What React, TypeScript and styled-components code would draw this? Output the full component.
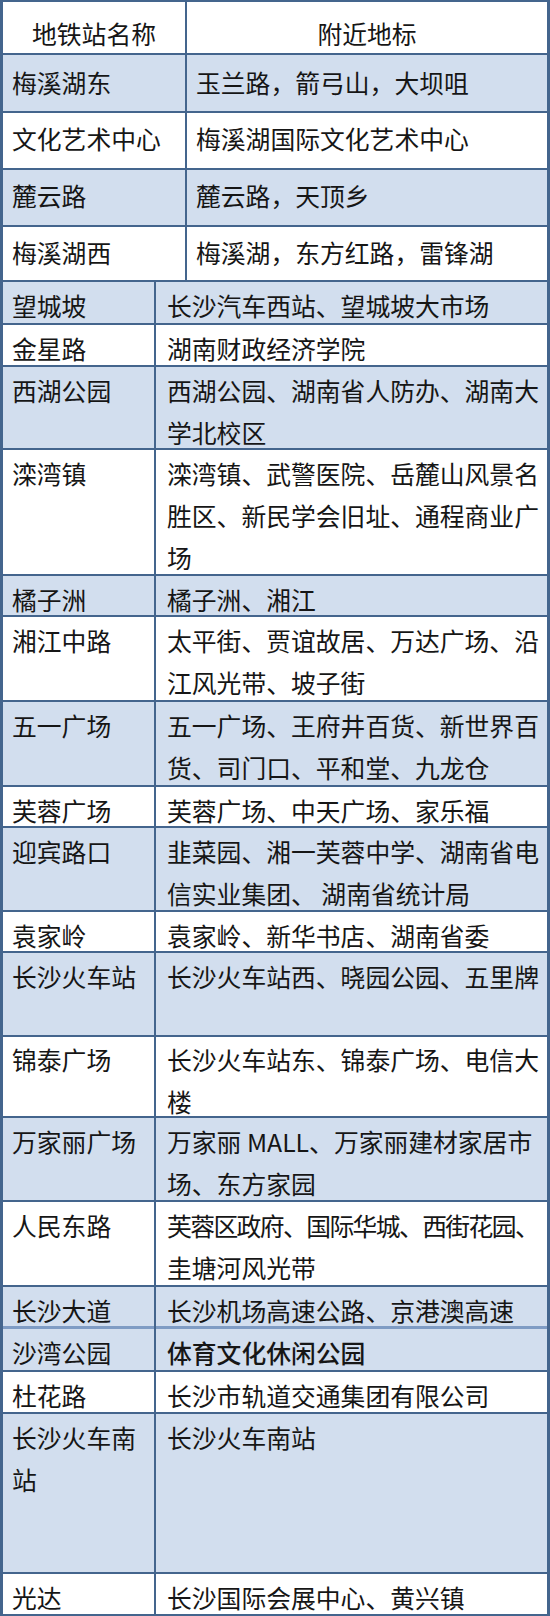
import React from "react";
import styled, { createGlobalStyle } from "styled-components";

const LINE = "#44658d";
const BLUE = "#d2deee";
const WHITE = "#ffffff";

const GlobalStyle = createGlobalStyle`
  html, body {
    margin: 0;
    padding: 0;
    background: #ffffff;
  }
  body {
    font-family: "Noto Sans CJK SC", "Noto Sans", sans-serif;
  }
`;

const Table = styled.div`
  width: 550px;
  box-sizing: border-box;
  border-left: 3px solid ${LINE};
  border-right: 3px solid ${LINE};
  border-top: 2px solid ${LINE};
`;

const Row = styled.div<{ $split: number; $h: number; $bg: string; $line: string; $lineW: number }>`
  display: grid;
  grid-template-columns: ${(p) => p.$split}px 1fr;
  height: ${(p) => p.$h}px;
  box-sizing: border-box;
  background: ${(p) => p.$bg};
  border-bottom: ${(p) => p.$lineW}px solid ${(p) => p.$line};
`;

const Cell = styled.div<{ $pl: number; $pt: number; $center?: boolean; $divider?: boolean }>`
  box-sizing: border-box;
  padding-left: ${(p) => (p.$center ? 0 : p.$pl)}px;
  padding-top: ${(p) => p.$pt}px;
  text-align: ${(p) => (p.$center ? "center" : "left")};
  border-right: ${(p) => (p.$divider ? `2px solid ${LINE}` : "none")};
  min-width: 0;
`;

const Lines = styled.div<{ $bold?: boolean }>`
  color: #161616;
  font-size: 24.8px;
  line-height: 42px;
  letter-spacing: 0;
  font-weight: ${(p) => (p.$bold ? 500 : 400)};
  white-space: nowrap;
`;

const Line = styled.div<{ $ls?: number }>`
  letter-spacing: ${(p) => (p.$ls !== undefined ? `${p.$ls}px` : "inherit")};
`;

type Station = {
  name: string[];
  places: string[];
  h: number;
  blue: boolean;
  pt?: number;
  tight?: number;
  bold?: boolean;
  soft?: boolean;
};

const first: Station[] = [
  { name: ["梅溪湖东"], places: ["玉兰路，箭弓山，大坝咀"], h: 58, blue: true, pt: 6 },
  { name: ["文化艺术中心"], places: ["梅溪湖国际文化艺术中心"], h: 57, blue: false },
  { name: ["麓云路"], places: ["麓云路，天顶乡"], h: 57, blue: true },
  { name: ["梅溪湖西"], places: ["梅溪湖，东方红路，雷锋湖"], h: 55, blue: false },
];

const second: Station[] = [
  { name: ["望城坡"], places: ["长沙汽车西站、望城坡大市场"], h: 43, blue: true },
  { name: ["金星路"], places: ["湖南财政经济学院"], h: 42, blue: false },
  { name: ["西湖公园"], places: ["西湖公园、湖南省人防办、湖南大", "学北校区"], h: 83, blue: true },
  {
    name: ["滦湾镇"],
    places: ["滦湾镇、武警医院、岳麓山风景名", "胜区、新民学会旧址、通程商业广", "场"],
    h: 126,
    blue: false,
  },
  { name: ["橘子洲"], places: ["橘子洲、湘江"], h: 41, blue: true },
  { name: ["湘江中路"], places: ["太平街、贾谊故居、万达广场、沿", "江风光带、坡子街"], h: 85, blue: false },
  { name: ["五一广场"], places: ["五一广场、王府井百货、新世界百", "货、司门口、平和堂、九龙仓"], h: 85, blue: true },
  { name: ["芙蓉广场"], places: ["芙蓉广场、中天广场、家乐福"], h: 41, blue: false },
  { name: ["迎宾路口"], places: ["韭菜园、湘一芙蓉中学、湖南省电", "信实业集团、 湖南省统计局"], h: 84, blue: true },
  { name: ["袁家岭"], places: ["袁家岭、新华书店、湖南省委"], h: 41, blue: false },
  { name: ["长沙火车站"], places: ["长沙火车站西、晓园公园、五里牌"], h: 84, blue: true },
  { name: ["锦泰广场"], places: ["长沙火车站东、锦泰广场、电信大", "楼"], h: 81, blue: false, pt: 1 },
  { name: ["万家丽广场"], places: ["万家丽 MALL、万家丽建材家居市", "场、东方家园"], h: 84, blue: true },
  {
    name: ["人民东路"],
    places: ["芙蓉区政府、国际华城、西街花园、", "圭塘河风光带"],
    h: 85,
    blue: false,
    tight: -1.6,
  },
  { name: ["长沙大道"], places: ["长沙机场高速公路、京港澳高速"], h: 42, blue: true, soft: true },
  { name: ["沙湾公园"], places: ["体育文化休闲公园"], h: 43, blue: true, bold: true },
  { name: ["杜花路"], places: ["长沙市轨道交通集团有限公司"], h: 42, blue: false },
  { name: ["长沙火车南", "站"], places: ["长沙火车南站"], h: 160, blue: true },
  { name: ["光达"], places: ["长沙国际会展中心、黄兴镇"], h: 42, blue: false },
];

function StationRow({
  s,
  split,
  namePad,
  placePad,
  pt,
}: {
  s: Station;
  split: number;
  namePad: number;
  placePad: number;
  pt: number;
}) {
  const top = s.pt ?? pt;
  return (
    <Row
      $split={split}
      $h={s.h}
      $bg={s.blue ? BLUE : WHITE}
      $line={s.soft ? "#7f9cc4" : LINE}
      $lineW={s.soft ? 3 : 2}
    >
      <Cell $pl={namePad} $pt={top} $divider>
        <Lines>
          {s.name.map((n) => (
            <Line key={n}>{n}</Line>
          ))}
        </Lines>
      </Cell>
      <Cell $pl={placePad} $pt={top}>
        <Lines $bold={s.bold}>
          {s.places.map((t, i) => (
            <Line key={t} $ls={i === 0 ? s.tight : undefined}>
              {t}
            </Line>
          ))}
        </Lines>
      </Cell>
    </Row>
  );
}

export default function App() {
  return (
    <>
      <GlobalStyle />
      <Table>
        <Row $split={184} $h={53} $bg={WHITE} $line={LINE} $lineW={2}>
          <Cell $pl={0} $pt={10} $center $divider>
            <Lines>地铁站名称</Lines>
          </Cell>
          <Cell $pl={0} $pt={10} $center>
            <Lines>附近地标</Lines>
          </Cell>
        </Row>
        {first.map((s) => (
          <StationRow key={s.name.join("")} s={s} split={184} namePad={9} placePad={9} pt={4} />
        ))}
        {second.map((s) => (
          <StationRow key={s.name.join("")} s={s} split={153} namePad={9} placePad={11} pt={2} />
        ))}
      </Table>
    </>
  );
}
